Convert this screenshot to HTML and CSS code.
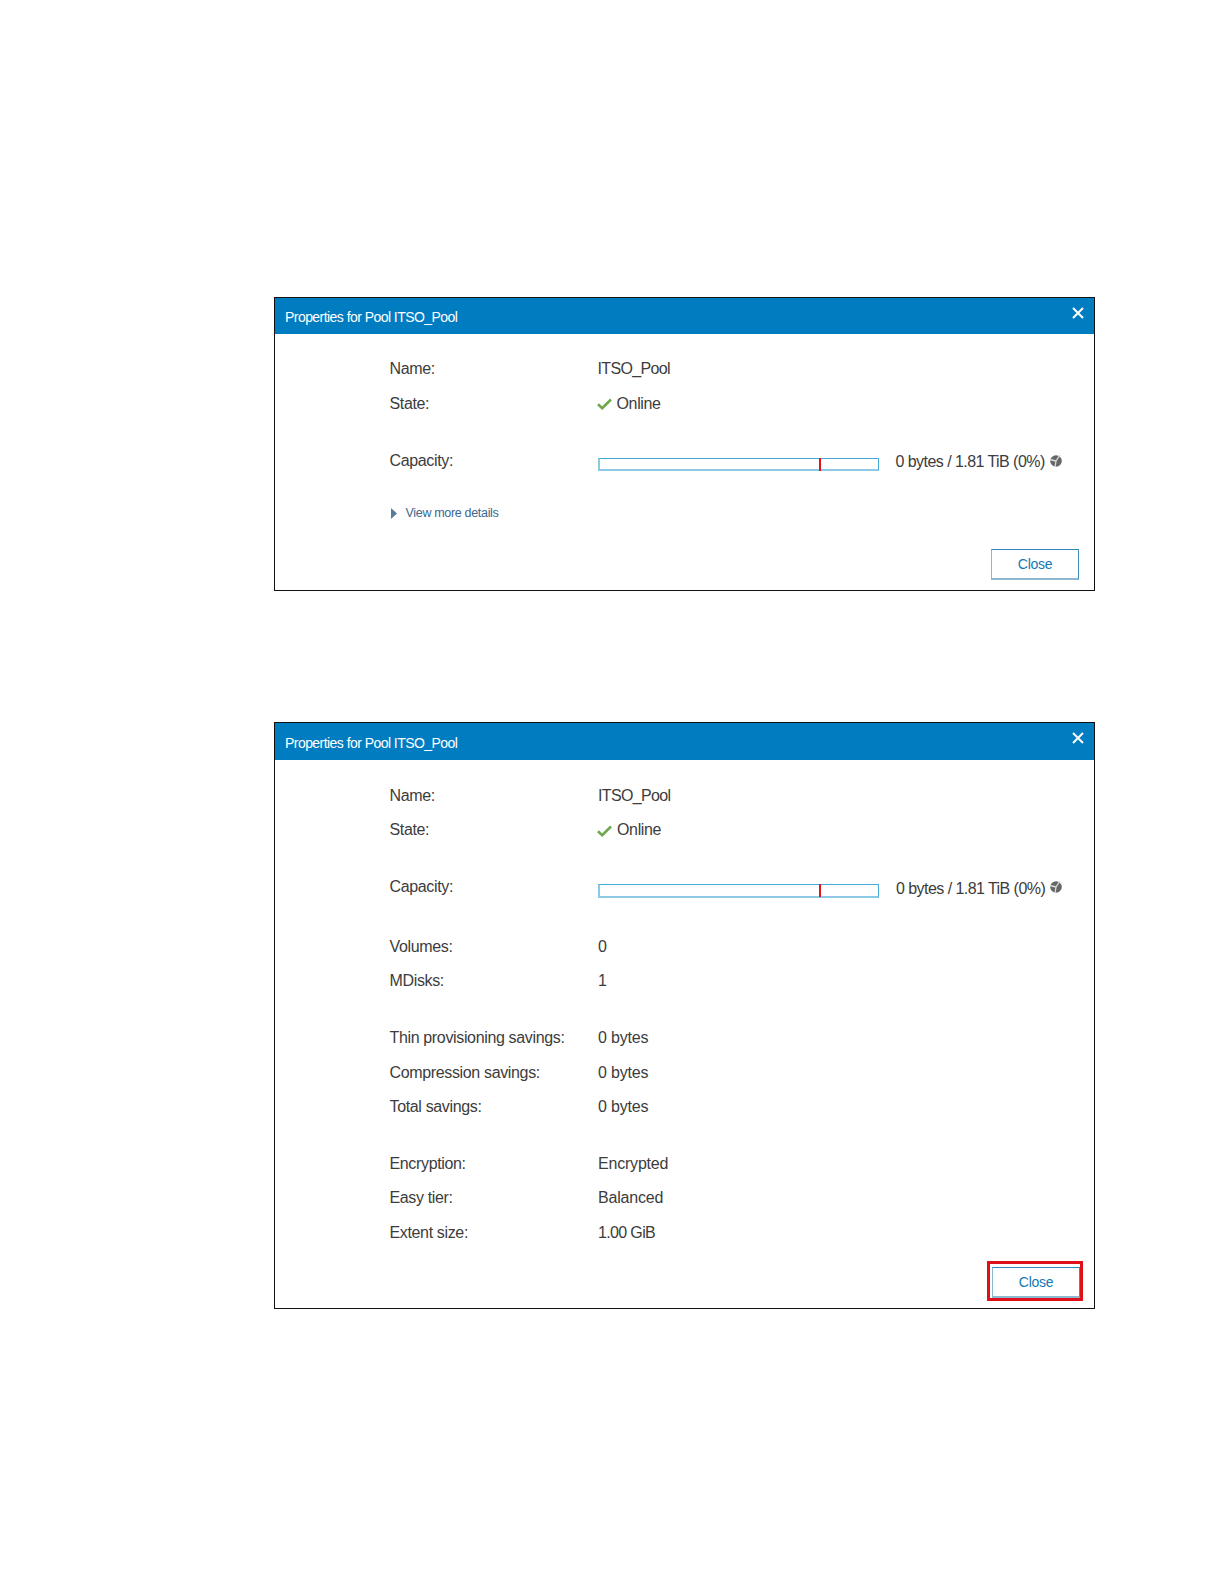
FILE: index.html
```html
<!DOCTYPE html>
<html lang="en">
<head>
<meta charset="utf-8">
<title>Properties for Pool ITSO_Pool</title>
<link rel="stylesheet" href="styles.css">
</head>
<body>
<main class="page">
  <section class="dialog dialog-short">
    <header class="titlebar">
      <h2 class="title">Properties for Pool ITSO_Pool</h2>
      <svg class="close-x" viewBox="0 0 12 12" width="12" height="12"><path d="M1 1L11 11M11 1L1 11" stroke="#fff" stroke-width="2"/></svg>
    </header>
    <div class="body">
      <div class="group">
        <div class="row"><span class="label">Name:</span><span class="value tight">ITSO_Pool</span></div>
        <div class="row"><span class="label">State:</span><span class="value state">
          <svg class="check" viewBox="0 0 15 12" width="15" height="12"><path d="M1 6.2L5.2 10.2L14 1.5" fill="none" stroke="#6fa84c" stroke-width="2.6"/></svg>Online</span></div>
      </div>
      <div class="group group-capacity">
        <div class="row"><span class="label label-raised">Capacity:</span><span class="value capacity">
          <span class="bar"><span class="marker"></span></span>
          <span class="cap-text">0 bytes / 1.81 TiB (0%)</span>
          <svg class="pie" viewBox="0 0 12 12" width="12" height="12"><circle cx="6" cy="6" r="5.8" fill="#666"/><path d="M6 6L0 4.5M6 6L5 12M6 6L10 0" stroke="#ddd" stroke-width="1.3"/></svg>
        </span></div>
      </div>
      <div class="details">
        <svg class="tri" viewBox="0 0 6 11" width="6" height="11"><path d="M0 0L6 5.5L0 11Z" fill="#5b7a99"/></svg>
        <a class="details-link">View more details</a>
      </div>
      <div class="footer"><button class="btn">Close</button></div>
    </div>
  </section>

  <section class="dialog dialog-full">
    <header class="titlebar">
      <h2 class="title">Properties for Pool ITSO_Pool</h2>
      <svg class="close-x" viewBox="0 0 12 12" width="12" height="12"><path d="M1 1L11 11M11 1L1 11" stroke="#fff" stroke-width="2"/></svg>
    </header>
    <div class="body">
      <div class="group">
        <div class="row"><span class="label">Name:</span><span class="value tight">ITSO_Pool</span></div>
        <div class="row"><span class="label">State:</span><span class="value state">
          <svg class="check" viewBox="0 0 15 12" width="15" height="12"><path d="M1 6.2L5.2 10.2L14 1.5" fill="none" stroke="#6fa84c" stroke-width="2.6"/></svg>Online</span></div>
      </div>
      <div class="group group-capacity">
        <div class="row"><span class="label label-raised">Capacity:</span><span class="value capacity">
          <span class="bar"><span class="marker"></span></span>
          <span class="cap-text">0 bytes / 1.81 TiB (0%)</span>
          <svg class="pie" viewBox="0 0 12 12" width="12" height="12"><circle cx="6" cy="6" r="5.8" fill="#666"/><path d="M6 6L0 4.5M6 6L5 12M6 6L10 0" stroke="#ddd" stroke-width="1.3"/></svg>
        </span></div>
      </div>
      <div class="group group-volumes">
        <div class="row"><span class="label">Volumes:</span><span class="value">0</span></div>
        <div class="row"><span class="label">MDisks:</span><span class="value">1</span></div>
      </div>
      <div class="group">
        <div class="row"><span class="label">Thin provisioning savings:</span><span class="value">0 bytes</span></div>
        <div class="row"><span class="label">Compression savings:</span><span class="value">0 bytes</span></div>
        <div class="row"><span class="label">Total savings:</span><span class="value">0 bytes</span></div>
      </div>
      <div class="group">
        <div class="row"><span class="label">Encryption:</span><span class="value">Encrypted</span></div>
        <div class="row"><span class="label">Easy tier:</span><span class="value">Balanced</span></div>
        <div class="row"><span class="label">Extent size:</span><span class="value tight">1.00 GiB</span></div>
      </div>
      <div class="footer"><span class="highlight"><button class="btn">Close</button></span></div>
    </div>
  </section>
</main>
</body>
</html>
```
FILE: styles.css
```css
* { box-sizing: border-box; }
body {
  margin: 0;
  background: #fff;
  font-family: "Liberation Sans", Arial, sans-serif;
  color: #3c3c3c;
}
.page {
  display: flex;
  flex-direction: column;
  gap: 131px;
  padding: 297px 129px 0 274px;
}
.dialog {
  border: 1px solid #111;
  background: #fff;
}
.dialog-short { height: 294px; }
.dialog-full { height: 587px; }
.titlebar {
  height: 36px;
  background: #007cc1;
  display: flex;
  justify-content: space-between;
  padding: 10px 10px 0 10px;
}
.dialog-full .titlebar { height: 37px; padding-top: 11px; }
.title {
  margin: 0;
  font-size: 14px;
  font-weight: 400;
  line-height: 18px;
  color: #fff;
  letter-spacing: -0.55px;
}
.close-x { margin-top: -1px; }
.dialog-full .close-x { margin-top: -2px; }
.body {
  padding: 18px 15px 0 114.5px;
}
.dialog-full .body { padding-top: 18.5px; }
.group + .group { margin-top: 22.5px; }
.group + .group-capacity { margin-top: 24.5px; }
.group + .group-volumes { margin-top: 23.5px; }
.row {
  display: flex;
  height: 34.4px;
  align-items: center;
  font-size: 16px;
  letter-spacing: -0.2px;
}
.label { width: 208px; flex: none; letter-spacing: -0.35px; }
.label-raised { margin-top: -3px; }
.tight { letter-spacing: -0.65px; }
.dialog-full .value { margin-left: 0.5px; }
.state { display: flex; align-items: center; letter-spacing: -0.35px; }
.check { margin-right: 5px; margin-top: 1px; margin-left: -1px; }
.capacity { display: flex; align-items: center; }
.bar {
  position: relative;
  display: block;
  width: 281px;
  height: 13.5px;
  margin-top: 4px;
  border-style: solid;
  border-width: 1px 1px 2px 2px;
  border-color: #45acd6 #45acd6 #8cc9e4 #8cc9e4;
}
.marker {
  position: absolute;
  left: 219px;
  top: -1px;
  width: 2px;
  height: 13px;
  background: #e0141c;
}
.cap-text { margin-left: 17px; white-space: nowrap; letter-spacing: -0.55px; }
.pie { margin-left: 5px; margin-top: -3px; }
.details {
  display: flex;
  align-items: center;
  gap: 9px;
  margin-top: 24.5px;
  height: 18px;
  padding-left: 1px;
}
.details-link {
  font-size: 12.5px;
  letter-spacing: -0.32px;
  color: #3a6890;
}
.footer {
  display: flex;
  justify-content: flex-end;
  margin-top: 27px;
}
.dialog-full .footer { margin-top: 17px; margin-right: -1px; }
.btn {
  width: 88px;
  height: 31px;
  border-style: solid;
  border-width: 1px 1px 2px 1.5px;
  border-color: #2f87bd #3d8fc0 #8db6d0 #8db6d0;
  background: #fff;
  color: #1478b4;
  font-family: "Liberation Sans", Arial, sans-serif;
  font-size: 14px;
  letter-spacing: -0.3px;
  padding: 0;
}
.highlight {
  position: relative;
  display: block;
}
.highlight::after {
  content: "";
  position: absolute;
  inset: -6px -3px -3px -5px;
  border: 3px solid #e0101a;
}
```
